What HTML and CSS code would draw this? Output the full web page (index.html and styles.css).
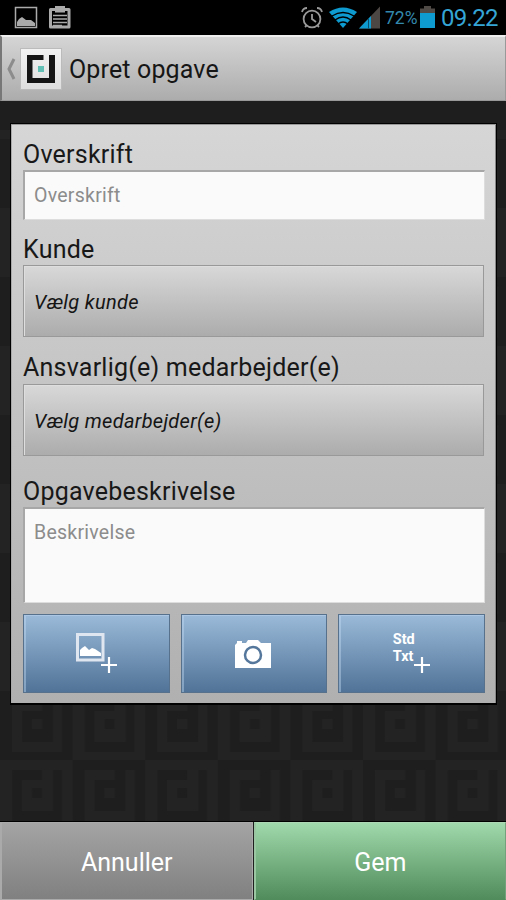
FILE: index.html
```html
<!DOCTYPE html>
<html lang="da">
<head>
<meta charset="utf-8">
<title>Opret opgave</title>
<link rel="stylesheet" href="styles.css">
</head>
<body>
<div class="screen">
  <svg class="backdrop" width="506" height="900" aria-hidden="true">
    <defs>
      <g id="mark"><path d="M42 11H12V62H62V11H53V52H22V21H42Z"/><rect x="32" y="29" width="10" height="10"/></g>
      <pattern id="tiles" width="145.2" height="138" y="70" patternUnits="userSpaceOnUse">
        <rect width="146" height="138" fill="#1e1e1e"/>
        <rect width="72.6" height="69" fill="#232323"/>
        <rect x="72.6" y="69" width="72.6" height="69" fill="#232323"/>
        <use href="#mark" fill="#1e1e1e" y="-1"/>
        <use href="#mark" fill="#232323" x="72.6" y="-1"/>
        <use href="#mark" fill="#232323" y="68"/>
        <use href="#mark" fill="#1e1e1e" x="72.6" y="68"/>
      </pattern>
    </defs>
    <rect y="130" width="506" height="770" fill="url(#tiles)"/>
  </svg>

  <div class="status">
    <svg class="notices" width="60" height="26" viewBox="0 0 60 26" fill="none" stroke="#aaa">
      <path d="M1.5 2.5H22.500V22.500H1.5Z" stroke-width="1.5"/>
      <path d="M3 21V17L5 14L8 12L12 15L17 15L21 18V21Z" fill="#aaa" stroke="none"/>
      <path d="M36.500 4.5H55V22H36.500Z" stroke-width="3" stroke-linejoin="round"/>
      <path d="M42 4V2H50V4M41 6.5H51" stroke-width="2"/>
      <path d="M39 10.5H53M39 14H53M39 17.5H53M39 20.500H48" stroke-width="1.5"/>
    </svg>
    <svg class="signals" width="82" height="26" viewBox="0 0 82 26" fill="none">
      <g stroke="#999" stroke-width="1.8"><circle cx="12" cy="14" r="8.4"/><path d="M12 9V14L16 17M2 7Q3 3 7 3M17 3Q21 3 22 7M5 22L7 20M19 22L17 20"/></g>
      <path d="M29 7Q43-2 57 7L43 23Z" fill="#0d9bd0"/>
      <path d="M32 11Q43 4 54 11M35 15Q43 9 51 15M38 19Q43 15 48 19" stroke="#000" stroke-width="1.3"/>
      <path d="M59 23.500L80 1.500V23.500Z" fill="#4c4744"/><path d="M59 23.500L71 11V23.500Z" fill="#0d9bd0"/><path d="M68.500 13V23.500" stroke="#08506d"/>
    </svg>
    <span class="percent">72%</span>
    <svg class="battery" width="15" height="22" viewBox="0 0 15 22"><path d="M0 2.500H4V0H11V2.500H15V22H0Z" fill="#504a47"/><path d="M0 7H15V22H0Z" fill="#0d9bd0"/></svg>
    <span class="clock">09.22</span>
  </div>

  <div class="header">
    <svg class="back" width="10" height="22" viewBox="0 0 10 22"><path d="M8 1L3 11L8 21" fill="none" stroke="#8c8c8c" stroke-width="3"/></svg>
    <div class="logo"><svg width="28" height="28" viewBox="0 0 28 28"><path d="M16.500 0H0V28H28V0H22V23H5.500V5H16.500Z" fill="#151515"/><rect x="11" y="11" width="6" height="6" fill="#62bfb5"/></svg></div>
    <h1 class="title">Opret opgave</h1>
  </div>

  <div class="card">
    <div class="label">Overskrift</div>
    <div class="field">Overskrift</div>
    <div class="label">Kunde</div>
    <div class="picker">Vælg kunde</div>
    <div class="label owner">Ansvarlig(e) medarbejder(e)</div>
    <div class="picker">Vælg medarbejder(e)</div>
    <div class="label description">Opgavebeskrivelse</div>
    <div class="field area">Beskrivelse</div>
    <div class="tools">
      <div class="tool"><svg width="42" height="42" viewBox="0 0 42 42"><path d="M2.500 1.500H28V27H2.500Z" fill="none" stroke="#dfe6ef" stroke-width="3"/><path d="M5 23V17L7 15L10 13L14 17L17 15L20 16L26 20V23Z" fill="#fff"/><path d="M26 32H42M34 24V40" stroke="#fff" stroke-width="2.200"/></svg></div>
      <div class="tool"><svg width="36" height="28" viewBox="0 0 36 28"><path d="M0 5L2 3V1H7V3H11L13 0H23L26 3H36V28H0Z" fill="#fff"/><circle cx="18" cy="15" r="8" fill="#fff" stroke="#55779b" stroke-width="2.500"/></svg></div>
      <div class="tool"><div class="stdtext"><span>Std</span><span>Txt</span></div><svg class="plus" width="16" height="16" viewBox="0 0 16 16"><path d="M0 8H16M8 0V16" stroke="#fff" stroke-width="2.200"/></svg></div>
    </div>
  </div>

  <div class="footer">
    <div class="action cancel">Annuller</div>
    <div class="action save">Gem</div>
  </div>
</div>
</body>
</html>
```
FILE: styles.css
```css
* { box-sizing: border-box; }
body { margin: 0; background: #1e1e1e; font-family: Roboto, sans-serif; }
.screen { position: relative; width: 506px; height: 900px; overflow: hidden; display: flex; flex-direction: column; }
.backdrop { position: absolute; left: 0; top: 0; z-index: -1; }
svg { display: block; flex: none; }
.status { height: 35px; background: #000; display: flex; align-items: flex-start; padding: 5px 0 0 14px; color: #35a5d5; flex: none; }
.signals { margin-left: 226px; }
.percent { font-size: 17.5px; line-height: 26px; margin-left: 3px; width: 35px; white-space: nowrap; color: #3389ad; }
.battery { margin-top: 1px; }
.clock { font-size: 24px; line-height: 27px; margin-left: 6px; letter-spacing: -.7px; white-space: nowrap; }
.header { flex: none; height: 66px; display: flex; align-items: center; padding-left: 4px; background: linear-gradient(#d5d5d5, #acacac); border: 1px solid #999; border-top: 2px solid #eee; border-left: 2px solid #777; }
.back { margin-right: 4px; }
.logo { width: 42px; height: 42px; display: flex; align-items: center; justify-content: center; background: linear-gradient(#f2f2f2, #dedede); border: 1px solid #bbb; }
.title { margin: 2px 0 0 7px; font-weight: 400; font-size: 25px; line-height: 30px; letter-spacing: .15px; color: #161616; white-space: nowrap; }
.card { flex: none; margin: 22px 0 0 10px; width: 487px; height: 582px; padding: 13px 11px 0 12px; background: linear-gradient(#d6d6d6, #b0b0b0); border: 1px solid #000; border-bottom-width: 2px; box-shadow: inset 0 1px #999, inset -1px 0 #888, inset 1px 0 #aaa; }
.label { height: 33px; line-height: 36px; font-size: 25px; letter-spacing: .22px; color: #181818; white-space: nowrap; }
.field { height: 50px; width: 462px; background: #fafafa; border-top: 2px solid #a7a7a7; border-left: 2px solid #a7a7a7; border-bottom: 1px solid #ddd; border-right: 1px solid #ddd; padding-left: 9px; font-size: 19.5px; line-height: 47px; letter-spacing: .25px; color: #8c8c8c; margin-bottom: 12px; }
.picker { height: 72px; width: 461px; border: 1px solid #999; background: linear-gradient(#d8d8d8, #acacac); padding-left: 10px; font-size: 20px; line-height: 72px; letter-spacing: .3px; font-style: italic; color: #151515; box-shadow: inset 1px 1px #dedede; margin-bottom: 13px; }
.owner { height: 34px; }
.description { margin-top: 18px; }
.area { height: 96px; margin-bottom: 11px; }
.tools { display: flex; gap: 11px; }
.tool { width: 146.5px; height: 79px; display: flex; align-items: center; justify-content: center; background: linear-gradient(#9bbad9, #507397); border: 1px solid #57708b; box-shadow: inset 2px 1px rgba(190,215,240,.45); }
.tool:nth-child(2) { padding-right: 1px; }
.stdtext { display: flex; flex-direction: column; font-size: 14.500px; line-height: 17px; font-weight: 700; color: #fff; margin-top: -11px; }
.plus { margin: 22px 0 0 -1px; }
.footer { margin-top: auto; height: 79px; display: flex; border-top: 1px solid #000; }
.action { flex: 1; display: flex; align-items: center; justify-content: center; font-size: 25px; color: #fff; border: 1px solid #aaa; border-left-width: 2px; padding-top: 2px; }
.cancel { background: linear-gradient(#a4a4a4, #808080); margin-right: 1px; }
.save { background: linear-gradient(#a0d9ab, #508c5c); border-color: #aed7b6 #73a17b #508c5c #9ac7a2; }
```
